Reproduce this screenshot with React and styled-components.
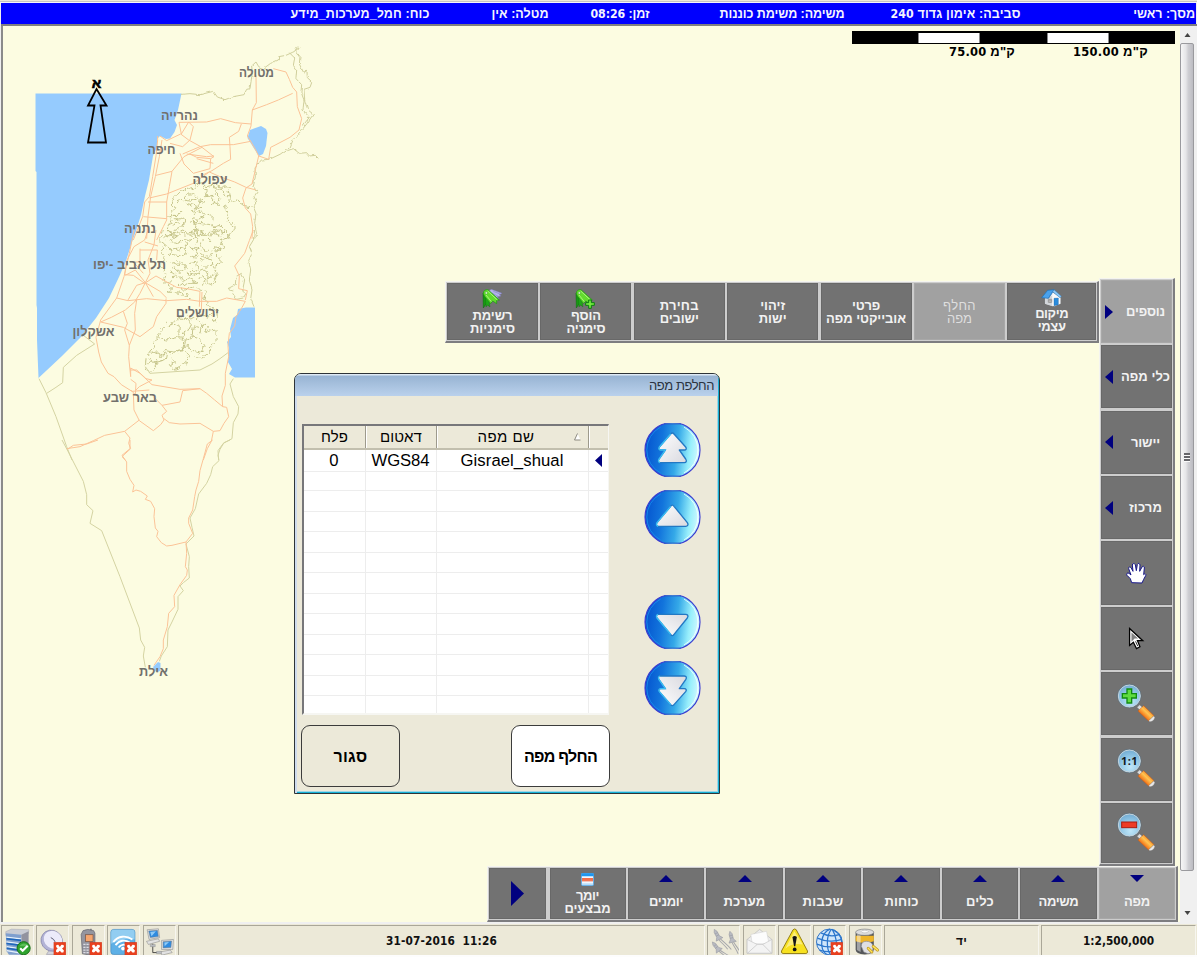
import React, { useLayoutEffect, useRef, useState } from "react";
import styled, { createGlobalStyle, css } from "styled-components";

const Global = createGlobalStyle`
  html, body { margin: 0; padding: 0; background: #f0f0f0; }
  body { width: 1197px; height: 957px; overflow: hidden; font-family: "Liberation Sans", sans-serif; }
  * { box-sizing: border-box; }
  svg { display: block; }
`;

/* ---------- text that is tracked to a given width ---------- */
const FitBox = styled.span`
  display: block;
  flex: none;
  width: ${(p) => p.$w}px;
  white-space: nowrap;
  direction: ${(p) => (p.$ltr ? "ltr" : "rtl")};
`;

const Num = styled.span`
  font-family: "DejaVu Sans Condensed", "DejaVu Sans", sans-serif;
  font-stretch: condensed;
  font-size: 0.98em;
`;

function Fit({ w, ltr, children }) {
  const ref = useRef(null);
  const [gap, setGap] = useState(0);
  useLayoutEffect(() => {
    const el = ref.current;
    const count = Math.max(1, el.textContent.length);
    const natural = el.getBoundingClientRect().width - gap * count;
    const next = (w - natural) / count;
    if (Math.abs(next - gap) > 0.02) setGap(next);
  }, [w, gap]);
  return (
    <FitBox $w={w} $ltr={ltr}>
      <span ref={ref} style={{ letterSpacing: gap }}>
        {children}
      </span>
    </FitBox>
  );
}

/* ---------- frame ---------- */
const Screen = styled.div`
  width: 1197px;
  height: 957px;
  display: flex;
  flex-direction: column;
  background: #f0f0f0;
`;

const TopStrip = styled.div`
  flex: none;
  height: 3px;
  background: linear-gradient(#ece9d8 0 1px, #c4c4c4 1px 2px, #f4f4fa 2px);
`;

const InfoBar = styled.header`
  flex: none;
  height: 21px;
  margin: 0 1px;
  padding: 1px 1px 0 0;
  background: #0000fe;
  color: #f4f4ff;
  display: grid;
  direction: rtl;
  grid-template-columns: 174.5px 176px 195px 101px 119px 1fr;
  align-items: center;
  font: bold 12.5px "Liberation Sans", sans-serif;
`;

const Body = styled.div`
  flex: none;
  height: 898px;
  display: flex;
  border-top: 2px solid #808080;
  margin-left: 1px;
`;

const Canvas = styled.main`
  position: relative;
  width: 1179px;
  height: 896px;
  border-left: 2px solid #8a8a8a;
  background: #fcfce1;
  overflow: hidden;
`;

const Over = styled.div`
  position: absolute;
  left: ${(p) => p.$x - 3}px;
  top: ${(p) => p.$y - 26}px;
`;

/* ---------- scrollbar ---------- */
const ScrollTrack = styled.div`
  width: 14px;
  height: 896px;
  background: #f0f0f0;
  display: flex;
  flex-direction: column;
  align-items: center;
`;
const ScrollCap = styled.div`
  flex: none;
  height: ${(p) => p.$h}px;
  display: flex;
  align-items: ${(p) => (p.$end ? "flex-end" : "center")};
  padding-bottom: ${(p) => (p.$end ? 7 : 0)}px;
`;
const Thumb = styled.div`
  flex: none;
  width: 14px;
  height: 828px;
  border: 1px solid #9a9a9e;
  border-radius: 2px;
  background: linear-gradient(90deg, #f6f6f6 0, #e6e6e8 40%, #cfcfd3 60%, #bcbcc2 100%);
  display: flex;
  flex-direction: column;
  align-items: center;
  justify-content: center;
`;
const Grip = styled.i`
  width: 6px;
  height: 3px;
  background: #66666a;
  border-bottom: 1px solid #fafafa;
`;

/* ---------- scale bar ---------- */
const ScaleBar = styled.div`
  width: 323px;
  height: 13px;
  background: #000;
  padding: 2px 0 1px 66px;
  display: flex;
  gap: 67px;
`;
const ScaleGap = styled.div`
  width: 62px;
  background: #fff;
  border: 1px solid #8a8a8a;
  border-width: 0 1px;
`;
const ScaleText = styled.div`
  display: flex;
  padding: 0 0 0 97px;
  gap: 58px;
  color: #000;
  font: bold 13px/16px "Liberation Sans", sans-serif;
`;

/* ---------- toolbars ---------- */
const barFrame = css`
  background: #cdcdcd;
  border: 1px solid #f4f4f0;
  border-right: 2px solid #7d7d80;
  border-bottom: 2px solid #7d7d80;
`;
const ContextBar = styled.div`
  ${barFrame}
  width: 654px;
  height: 62px;
  display: grid;
  grid-template-columns: repeat(6, 91px) 1fr;
  gap: 2.4px;
  padding: 1px;
`;
const SideBar = styled.div`
  ${barFrame}
  width: 76px;
  height: 588px;
  display: grid;
  grid-template-rows: 63px repeat(7, 63.1px) 1fr;
  gap: 2.3px;
  padding: 1px;
`;
const MainBar = styled.div`
  ${barFrame}
  width: 691px;
  height: 56px;
  display: grid;
  grid-template-columns: 57px 1fr;
  gap: 3.5px;
  padding: 1px;
`;
const MenuItems = styled.div`
  display: grid;
  grid-template-columns: repeat(8, 1fr);
  gap: 2.4px;
`;
const tool = css`
  background: ${(p) => (p.$on ? "#a1a1a1" : "#727272")};
  border: 1px solid ${(p) => (p.$on ? "#a8a8a8" : "#686868")};
  color: ${(p) => (p.$dim ? "#dedede" : "#f2f2f2")};
  font: ${(p) => (p.$dim ? "normal" : "bold")} 13px/13px "Liberation Sans", sans-serif;
  min-width: 0;
  min-height: 0;
`;
const StackTool = styled.div`
  ${tool}
  display: flex;
  flex-direction: column;
  align-items: center;
  justify-content: ${(p) => (p.$icon ? "flex-start" : "center")};
  padding-top: ${(p) => (p.$icon ? p.$icon : 0)}px;
`;
const SideTool = styled.div`
  ${tool}
  display: flex;
  align-items: center;
  justify-content: ${(p) => (p.$icon ? "center" : "flex-start")};
  padding: ${(p) => (p.$icon ? (p.$lens ? "0 4px 4px 0" : "0 1px 0 0") : "0 0 0 3px")};
`;
const SideLabel = styled.div`
  flex: 1;
  display: flex;
  justify-content: center;
  padding-left: 6px;
  margin-right: -1px;
`;
const MenuTool = styled.div`
  ${tool}
  display: flex;
  flex-direction: column;
  align-items: center;
  padding-top: ${(p) => p.$pad ?? 6}px;
  gap: ${(p) => p.$gap ?? 12.5}px;
`;
const Lines = styled.div`
  display: flex;
  flex-direction: column;
  align-items: center;
`;

/* ---------- dialog ---------- */
const Dialog = styled.section`
  width: 426px;
  height: 421px;
  border: 1px solid #2e3438;
  border-radius: 7px 7px 0 0;
  background: #ece9d9;
  overflow: hidden;
  box-shadow: inset 2px 0 #cfdcee, inset -1px -1px #15b0d4, inset -2px -2px #9fd6e6;
`;
const TitleBar = styled.div`
  height: 22px;
  margin: 0 1px 0 0;
  padding: 3px 4px 0;
  background: linear-gradient(#dfeaf5 0 1px, #98b4d3 2px, #bad1ec);
  display: flex;
  justify-content: flex-end;
  color: #2b3340;
  font: 13px/18px "Liberation Sans", sans-serif;
`;
const DialogBody = styled.div`
  display: flex;
  padding: 28px 0 0 7px;
`;
const LeftCol = styled.div`
  width: 308px;
`;
const Table = styled.div`
  width: 307px;
  height: 291px;
  border: 2px solid #77777a;
  border-right-color: #f6f6f2;
  border-bottom-color: #f6f6f2;
  border-right-width: 1px;
  background: #fff;
  overflow: hidden;
`;
const rowGrid = css`
  display: grid;
  grid-template-columns: 62px 71px 152px 1fr;
`;
const HeadRow = styled.div`
  ${rowGrid}
  height: 24px;
  background: #ece9d9;
  border-bottom: 2px solid #c2bfae;
  font: 15px/22px "Liberation Sans", sans-serif;
`;
const HeadCell = styled.div`
  position: relative;
  display: flex;
  justify-content: center;
  padding-right: ${(p) => p.$shift || 0}px;
  &:not(:last-child) {
    border-right: 1px solid #9d9a8c;
    box-shadow: 1px 0 #fff;
  }
`;
const SortMark = styled.div`
  position: absolute;
  right: 7px;
  top: 7px;
`;
const Row = styled.div`
  ${rowGrid}
  height: 20.5px;
  font: 16.7px/21px "Liberation Sans", sans-serif;
  color: #000;
`;
const Cell = styled.div`
  display: flex;
  justify-content: center;
  align-items: center;
  padding-right: 1px;
  border-bottom: 1px solid #ededed;
  &:not(:last-child) { border-right: 1px solid #ededed; }
`;
const Actions = styled.div`
  display: flex;
  justify-content: space-between;
  padding-top: 10px;
  margin-left: -1px;
`;
const Action = styled.button`
  width: 99px;
  height: 62px;
  padding: 2px 0 0;
  border: 1.5px solid #3c3c3c;
  border-radius: 9px;
  background: ${(p) => (p.$primary ? "#fff" : "#ece9d9")};
  display: flex;
  align-items: center;
  justify-content: center;
  color: #000;
  font: bold 16px/18px "Liberation Sans", sans-serif;
`;
const Pager = styled.div`
  display: flex;
  flex-direction: column;
  padding-left: 34px;
  margin-top: -1px;
`;
const PagerSlot = styled.div`
  margin-bottom: ${(p) => p.$after}px;
`;

/* ---------- status bar ---------- */
const Status = styled.footer`
  flex: none;
  height: 35px;
  background: linear-gradient(#f0f0f0 0 2px, #ece9d8 2px 33px, #fdfdfd 33px);
  padding: 3px 1px 2px;
  display: grid;
  grid-template-columns: 33px 33px 33px 33px 33px 526.5px 33px 33px 33px 33px 33px 154.5px 154.5px;
  gap: 2.45px;
`;
const StatusCell = styled.div`
  height: 30px;
  border-left: 1px solid #aaa798;
  border-top: 1px solid #aaa798;
  border-right: 1px solid #f7f6ef;
  overflow: hidden;
  display: flex;
  align-items: center;
  justify-content: center;
  color: #111;
  font: bold 12px/14px "Liberation Sans", sans-serif;
`;

/* ---------- small marks ---------- */
const NAVY = "#00007f";
function Tri({ dir, w = 8, h = 14 }) {
  const pts = {
    left: `${w},0 ${w},${h} 0,${h / 2}`,
    right: `0,0 ${w},${h / 2} 0,${h}`,
    up: `0,${h} ${w},${h} ${w / 2},0`,
    down: `0,0 ${w},0 ${w / 2},${h}`,
  }[dir];
  return (
    <svg width={w} height={h}>
      <polygon points={pts} fill={NAVY} />
    </svg>
  );
}

function ScrollArrow({ down }) {
  return (
    <svg width="7" height="4" viewBox="0 0 7 4">
      <path d={down ? "M0.5 0H6.5L3.5 4Z" : "M0.5 4H6.5L3.5 0Z"} fill="#444" />
    </svg>
  );
}

/* ---------- icons ---------- */
function House() {
  return (
    <svg width="21" height="18" viewBox="0 0 63 54">
      <path d="M12 25L34 10 58 26V44L40 52 12 44Z" fill="#e9ecef" stroke="#9aa3ab" />
      <path d="M12 25V44L34 52V20Z" fill="#d2d6da" />
      <path d="M34 10L58 26V44L34 52Z" fill="#fafafa" />
      <path d="M2 26L20 4 39 2 22 28Z" fill="#4aa2ec" stroke="#1d6fb8" strokeWidth="2" />
      <path d="M39 2L61 22 57 26 36 9 22 28Z" fill="#8fcaf8" stroke="#2f7fc4" strokeWidth="1.5" />
      <path d="M39 28L52 27V47L39 50Z" fill="#2a8bdc" stroke="#135c9c" />
      <path d="M22 31H32V40H22ZM27 31V40M22 35.500H32" fill="#fff" stroke="#777" strokeWidth="2" />
    </svg>
  );
}

function Tags({ plus }) {
  return (
    <svg width="21" height="20" viewBox="0 0 63 60">
      {!plus && (
        <g fill="#b5b4ea" stroke="#7b79bd" strokeWidth="1.500">
          <path d="M18 7L28 1 60 13 52 17 57 21 46 23 52 30 30 18Z" />
          <path d="M34 7L54 15M30 12L48 22" fill="none" />
        </g>
      )}
      <path d="M3 12L13 17 21 49 12 45 4 57Z" fill="#179a12" stroke="#0b6a0a" strokeWidth="1.500" />
      <path d="M10 24L20 30 24 54 17 48 12 54Z" fill="#1fa818" stroke="#0b6a0a" strokeWidth="1" />
      <path d="M4 14C4 5 10 1 18 2L52 33 44 34 44 44 32 36 26 44 8 22Z" fill="#62db2c" stroke="#1b9413" strokeWidth="2" />
      <path d="M17 6L46 33M12 18L28 38" stroke="#a9f37b" strokeWidth="3" fill="none" />
      <circle cx="13" cy="12" r="3.500" fill="#e9ffe0" stroke="#1a7a12" />
      {plus && (
        <path d="M41 33H49V41H58V49H49V58H41V49H32V41H41Z" fill="#74ea3f" stroke="#0b7d10" strokeWidth="3" />
      )}
    </svg>
  );
}

function Hand() {
  return (
    <svg width="21" height="22" viewBox="0 0 63 66">
      <path
        d="M17 62L13 50 3 40C0 35 4 31 9 34L15 39 8 20C7 15 12 13 15 17L21 28 19 9C19 4 26 3 28 8L31 26 34 7C36 2 42 4 42 9L41 28 48 15C51 11 56 13 55 18L53 38C56 34 61 35 59 41L53 52 48 63Z"
        fill="#fff"
        stroke="#17178a"
        strokeWidth="3"
        strokeLinejoin="round"
      />
    </svg>
  );
}

function Cursor() {
  return (
    <svg width="17" height="23" viewBox="0 0 54 72">
      <path d="M5 4V58L17 48 27 68 38 62 30 43H47Z" fill="#fff" stroke="#000" strokeWidth="4" />
      <path d="M11 17V46L18 39 21 36 32 36Z" fill="#828282" />
      <path d="M24 45L31 60" stroke="#000" strokeWidth="2.500" />
    </svg>
  );
}

function Magnifier({ kind }) {
  const id = `lens-${kind}`;
  return (
    <svg width="40" height="40" viewBox="0 0 120 120">
      <defs>
        <radialGradient id={id} cx=".55" cy=".75" r=".8">
          <stop offset="0" stopColor="#bfe6f8" />
          <stop offset=".6" stopColor="#8cc3e4" />
          <stop offset="1" stopColor="#6ba4cc" />
        </radialGradient>
        <linearGradient id={`${id}-h`} x1="0" y1="1" x2="1" y2="0">
          <stop offset="0" stopColor="#e0480a" />
          <stop offset=".35" stopColor="#f47a1c" />
          <stop offset=".55" stopColor="#ffc552" />
          <stop offset=".75" stopColor="#f47a1c" />
          <stop offset="1" stopColor="#e0480a" />
        </linearGradient>
      </defs>
      <path d="M66 76L74 68 86 79 77 88Z" fill="#d9dcde" stroke="#777" strokeWidth="2" />
      <path d="M69 87L86 71 117 101 101 117Z" fill={`url(#${id}-h)`} stroke="#c65a14" strokeWidth="1.500" />
      <path d="M101 116L116 102 119 106C119 114 111 120 104 119Z" fill="#e8e8e8" stroke="#777" />
      <circle cx="43" cy="42" r="35" fill={`url(#${id})`} stroke="#5b6a74" strokeWidth="3" />
      <circle cx="43" cy="42" r="33" fill="none" stroke="#c4d3dc" strokeWidth="3" />
      {kind === "in" && (
        <path d="M36 21H50V35H64V48H50V63H36V48H22V35H36Z" fill="#5fdc3f" stroke="#128a12" strokeWidth="4" />
      )}
      {kind === "out" && <rect x="20" y="33" width="45" height="17" fill="#ee3b26" stroke="#a81d12" strokeWidth="3" />}
      {kind === "one" && (
        <text x="43" y="53" textAnchor="middle" fontFamily="Noto Sans" fontWeight="700" fontSize="33" fill="#10191f" textLength="50">
          1:1
        </text>
      )}
    </svg>
  );
}

function Journal() {
  return (
    <svg width="13" height="13" viewBox="0 0 39 39">
      <rect x="1" y="1" width="37" height="37" rx="4" fill="#eef7ff" stroke="#1f96ee" strokeWidth="2" />
      <path d="M1 4Q1 1 4 1H35Q38 1 38 4V10H1Z" fill="#1f96ee" />
      <path d="M3 15H36V25H3Z" fill="#f1603a" />
      <path d="M3 18H36M3 22H36" stroke="#ffb29a" />
      <path d="M3 31H36V36H3Z" fill="#b8dcf8" />
    </svg>
  );
}

function RoundArrow({ kind }) {
  const down = kind === "down" || kind === "last";
  const double = kind === "first" || kind === "last";
  const single = "M80 49C83 44 87 44 90 49L130 98C134 104 131 109 125 109H43C37 109 35 104 39 98Z";
  const twice =
    "M80 33C83 29 87 29 90 33L125 72C129 77 126 81 121 81H106L125 108C129 114 127 119 121 119H48C42 119 41 114 45 108L64 81H50C44 81 42 77 46 72Z";
  return (
    <svg width="57" height="54" viewBox="0 0 171 162">
      <defs>
        <linearGradient id={`ball-${kind}`} x1="0" y1=".38" x2="1" y2=".5">
          <stop offset="0" stopColor="#0454cf" />
          <stop offset=".3" stopColor="#1274dc" />
          <stop offset=".58" stopColor="#35a9e8" />
          <stop offset=".82" stopColor="#98effc" />
          <stop offset="1" stopColor="#d5f9ff" />
        </linearGradient>
        <linearGradient id={`face-${kind}`} x1="0" y1="0" x2="1" y2="1">
          <stop offset="0" stopColor="#fff" />
          <stop offset="1" stopColor="#d9d9df" />
        </linearGradient>
        <clipPath id={`cut-${kind}`}>
          <rect x="0" y="1" width="171" height="160" />
        </clipPath>
      </defs>
      <g clipPath={`url(#cut-${kind})`}>
        <circle cx="85.500" cy="81" r="82.500" fill={`url(#ball-${kind})`} stroke="#3b3bd0" strokeWidth="3.500" />
        <path d="M120 12A78 78 0 0 1 120 150" fill="none" stroke="#fff" strokeWidth="3" opacity=".8" />
        <path d="M50 12A78 78 0 0 0 50 150" fill="none" stroke="#1b8cf0" strokeWidth="3" opacity=".8" />
        <path d="M60 2.500H111M60 159.500H111" stroke="#2a57c4" strokeWidth="3" />
      </g>
      <g transform={down ? (double ? "translate(0 164) scale(1 -1)" : "translate(0 167) scale(1 -1)") : undefined}>
        <path
          d={double ? twice : single}
          fill={`url(#face-${kind})`}
          stroke="#2278c4"
          strokeWidth="4"
          strokeLinejoin="round"
        />
        <path
          d={double ? "M80 33L46 72Q42 79 50 81H64L45 108Q41 116 48 119" : "M80 49L39 98Q35 105 42 109"}
          fill="none"
          stroke="#39bdf3"
          strokeWidth="4"
        />
      </g>
    </svg>
  );
}

function Cross() {
  return (
    <g>
      <rect x="54" y="49" width="38" height="41" fill="#e8401f" stroke="#c02c10" strokeWidth="1" />
      <path d="M62 58L68 57 73 64 78 57 85 58 86 64 80 69 86 75 84 82 78 82 73 76 67 82 61 80 61 74 66 69 61 64Z" fill="#fff" />
    </g>
  );
}

function StatusIcon({ children }) {
  return (
    <svg width="33" height="30" viewBox="0 0 99 90">
      {children}
    </svg>
  );
}

const Server = () => (
  <StatusIcon>
    <path d="M12 15L30 7 86 9 84 22 66 30 12 27Z" fill="#c9ccd4" stroke="#8e929c" />
    <path d="M12 20L62 25V89H22L15 78Z" fill="#7f9fce" />
    <path d="M62 25L85 14V78L64 90Z" fill="#92939f" />
    <path d="M14 33L61 38M14 48L61 54M15 63L61 70M16 76L60 84" stroke="#e6f1fb" strokeWidth="4" />
    <path d="M14 38L61 43M14 53L61 59M15 68L61 75" stroke="#1f67bc" strokeWidth="5" />
    <circle cx="69" cy="68" r="21" fill="#2fa32e" stroke="#176f1a" strokeWidth="3" />
    <path d="M56 62C62 50 80 50 84 62" fill="#7dd277" opacity=".6" />
    <path d="M58 68L66 76 82 60" fill="none" stroke="#fff" strokeWidth="7" />
  </StatusIcon>
);
const Dish = () => (
  <StatusIcon>
    <path d="M38 76L30 88H66L56 74Z" fill="#d3d3dc" stroke="#9b9bab" strokeWidth="2" />
    <ellipse cx="47" cy="44" rx="35" ry="33" transform="rotate(35 47 44)" fill="#b3b3d6" stroke="#7c7ca4" strokeWidth="2" />
    <ellipse cx="51" cy="41" rx="31" ry="27" transform="rotate(35 51 41)" fill="#ecebfa" />
    <path d="M53 40L44 34M53 40L58 48" stroke="#54546c" strokeWidth="3" />
    <Cross />
  </StatusIcon>
);
const Phone = () => (
  <StatusIcon>
    <path d="M54 6H60V16H54Z" fill="#888" />
    <path d="M32 12Q46 4 66 12L70 20V78Q66 88 48 89L30 86 26 24Z" fill="#94959f" stroke="#5c5d68" strokeWidth="2" />
    <rect x="40" y="25" width="24" height="22" fill="#f5a56e" stroke="#6f4a3a" strokeWidth="2" />
    <path d="M33 56H56M33 65H52M33 74H52M33 82H52" stroke="#dddde4" strokeWidth="4" strokeDasharray="7 3" />
    <Cross />
  </StatusIcon>
);
const Wifi = () => (
  <StatusIcon>
    <rect x="9" y="8" width="77" height="80" rx="9" fill="#5eb0e6" stroke="#3f86bd" strokeWidth="2" />
    <path d="M10 16Q10 9 18 9H78Q85 9 85 16V40Q50 34 10 54Z" fill="#a8daf5" opacity=".7" />
    <g fill="none" stroke="#fff" strokeWidth="6">
      <path d="M17 48C32 28 58 26 78 40" />
      <path d="M24 58C36 42 56 40 69 50" />
      <path d="M34 66C41 56 52 55 60 60" />
    </g>
    <circle cx="48" cy="69" r="6" fill="#fff" />
    <Cross />
  </StatusIcon>
);
const Network = () => (
  <StatusIcon>
    <g stroke="#777" strokeWidth="1.500">
      <path d="M10 9L46 6 50 34 16 40Z" fill="#dfe2e6" />
      <path d="M15 13L43 11 46 31 20 34Z" fill="#2f8be0" />
      <path d="M8 46L46 38 50 46 14 56Z" fill="#e2e2e2" />
      <path d="M56 43L94 40 92 72 56 72Z" fill="#dfe2e6" />
      <path d="M61 47L88 45 86 66 61 67Z" fill="#2f8be0" />
      <path d="M50 80L84 74 90 82 58 90Z" fill="#e2e2e2" />
    </g>
    <path d="M28 54V82H54" fill="none" stroke="#222" strokeWidth="2.500" />
    <path d="M20 56H36V63H20ZM40 78H56V86H40Z" fill="#b9bcc0" stroke="#777" />
    <path d="M20 16L38 14 24 30ZM65 50L80 48 66 62Z" fill="#8fcaf6" />
  </StatusIcon>
);
const Missiles = () => (
  <StatusIcon>
    <g fill="#b9bbc2" stroke="#8f929b" strokeWidth="1.500">
      {[
        "translate(20 8) rotate(-28)",
        "translate(14 48) rotate(-38)",
        "translate(70 14) rotate(-14)",
      ].map((t) => (
        <g key={t} transform={t}>
          <path d="M0 0L5 9V26L12 36H-12L-5 26V9Z" />
          <path d="M-5 14H5M-5 22H5" fill="none" />
          <path d="M-2 36C0 50 6 60 8 76M3 36C8 52 14 62 18 82" fill="none" stroke="#a5a6ab" strokeWidth="3" />
        </g>
      ))}
    </g>
  </StatusIcon>
);
const Mail = () => (
  <StatusIcon>
    <path d="M10 40L50 8 89 40V84H10Z" fill="#ececec" stroke="#b8b8b8" strokeWidth="2" />
    <path d="M22 24L72 14 80 54H26Z" fill="#fcfcfc" stroke="#ccc" strokeWidth="1.500" />
    <path d="M10 40L42 56H60L89 40V84H10Z" fill="#f3f3f3" stroke="#c2c2c2" strokeWidth="2" />
    <path d="M11 84L42 56M60 56L88 84" stroke="#bdbdbd" strokeWidth="2" />
  </StatusIcon>
);
const Warning = () => (
  <StatusIcon>
    <path d="M45 9Q50 4 55 9L91 77Q93 84 86 85H13Q6 84 8 77Z" fill="#f7e120" stroke="#8f7a10" strokeWidth="3" />
    <path d="M49 14L20 70Q40 50 76 56Z" fill="#fdf29a" opacity=".75" />
    <path d="M43 32Q50 26 57 32L52 62H48Z" fill="#151515" />
    <circle cx="50" cy="72" r="6" fill="#151515" />
  </StatusIcon>
);
const Globe = () => (
  <StatusIcon>
    <circle cx="49" cy="48" r="41" fill="#cfe6fb" stroke="#2a6dc0" strokeWidth="3" />
    <g fill="none" stroke="#2b76cc" strokeWidth="4">
      <path d="M51 7C20 20 16 70 40 88M56 7C40 26 38 66 52 88M58 7C72 30 74 60 68 84M62 10C84 22 92 42 88 60" />
      <path d="M22 19C42 30 66 30 82 24M11 36C36 48 68 48 89 40M9 55C34 66 64 66 90 58M18 74C34 80 50 80 62 78" />
    </g>
    <Cross />
  </StatusIcon>
);
const Battery = () => (
  <StatusIcon>
    <path d="M18 18H76V72Q76 86 47 88 18 86 18 72Z" fill="#55575b" />
    <path d="M18 28H76V46Q48 56 18 46Z" fill="#eeb52a" />
    <path d="M22 20H34V80L22 74Z" fill="#fff" opacity=".45" />
    <ellipse cx="47" cy="17" rx="29" ry="10" fill="#dcdcdc" stroke="#77787a" strokeWidth="2" />
    <ellipse cx="47" cy="15" rx="11" ry="4" fill="#fafafa" stroke="#888" />
    <path d="M36 62Q36 46 52 46 70 46 74 62L72 80 58 86 44 80Z" fill="#dfdfe2" stroke="#85858a" strokeWidth="2" />
    <path d="M58 68L70 80M74 62L88 74" stroke="#b98f14" strokeWidth="9" strokeLinecap="round" />
    <path d="M58 68L70 80M74 62L88 74" stroke="#ffe35c" strokeWidth="5" strokeLinecap="round" />
  </StatusIcon>
);

/* ---------- map ---------- */
const MapSvg = styled.svg`
  position: absolute;
  left: 0;
  top: 0;
  text {
    font: bold 13.5px "Liberation Sans", sans-serif;
    fill: #72706c;
    direction: rtl;
    text-anchor: middle;
  }
  text.north {
    fill: #000;
    stroke: #000;
    stroke-width: 0.6px;
    font-size: 14px;
  }
`;

const CITIES = [
  ["מטולה", 256.5, 76.5, 35],
  ["נהרייה", 179.5, 119.5, 37],
  ["חיפה", 161.5, 154, 28],
  ["עפולה", 210, 184, 35],
  ["נתניה", 140, 233, 32],
  ["תל אביב -יפו", 129.5, 268.7, 73],
  ["ירושלים", 197.5, 317, 43],
  ["אשקלון", 93.5, 336, 42],
  ["באר שבע", 130, 402, 54],
  ["אילת", 153.5, 675.5, 29],
];

function MapDrawing() {
  return (
    <MapSvg width="400" height="700" viewBox="3 26 400 700">
      <defs>
        <filter id="rugged" x="-5%" y="-5%" width="110%" height="110%">
          <feTurbulence type="fractalNoise" baseFrequency="0.22" numOctaves="2" seed="7" />
          <feDisplacementMap in="SourceGraphic" scale="7" xChannelSelector="R" yChannelSelector="G" />
        </filter>
        <filter id="rough" x="-5%" y="-5%" width="110%" height="110%">
          <feTurbulence type="fractalNoise" baseFrequency="0.18" numOctaves="2" seed="3" />
          <feDisplacementMap in="SourceGraphic" scale="3" xChannelSelector="R" yChannelSelector="G" />
        </filter>
      </defs>
      <path
        d="M35.500 93.500H181.500L178 110 174.500 120 177 125 174.500 132 170 138.500 166 139 160 136 157 139 157 147 153 156 149 180 145 196 141 215 136 231 132 242 126 261 119 277 109 298 96 318 80 338 62 356 38.500 378 37 340 37 308 36.500 305 36.500 172 35.500 171Z"
        fill="#95cbfe"
      />
      <path d="M261 126L266 129 267.500 133 266 146 263 154 259 156 255 150 247.500 138 250 130Z" fill="#95cbfe" />
      <path d="M246 307.500H255V377.500H235L229 374 232 369 228 362 229 348 227 342 231 337 230 329 233 318 237 315 238 309Z" fill="#95cbfe" />
      <path d="M153 667L158 662 160.500 663V671L156 672Z" fill="#95cbfe" />

      <g fill="none" strokeWidth="3" strokeLinejoin="round">
        <g filter="url(#rough)">
          <g transform="scale(.33333)">
            <path
              stroke="#d0cf9c"
              d="M543 283L570 281 600 284 640 274 652 291 675 299 700 290 732 284 740 268 750 266 757 218 755 198 768 186 776 200 790 206 812 190 835 180 836 170 858 166 884 154 892 140 M886 152L899 141 890 156 900 170 898 192 910 216 921 214 922 236 935 248 930 262 912 268 914 300 922 328 940 343 920 372 904 392 880 418 870 442 840 463 808 478 784 480 M868 158L884 174 880 196 890 210 888 236 905 254 903 276 912 300 909 330 928 352 908 378 M862 452L880 446 898 460 920 458 928 468 946 466 955 475"
            />
            <path stroke="#d0cf9c" d="M784 480L765 504 766 530 760 560 772 575 762 590 770 606 760 620 768 640 764 670 770 700 764 716" />
          </g>
          <g transform="translate(0 230) scale(.33333)">
            <path
              stroke="#d0cf9c"
              d="M764 0L760 30 748 50 756 70 746 92 752 120 748 150 756 180 752 206 762 230 M700 180L684 176 706 164 708 140 724 130 734 150 728 180 738 190 730 204 710 208 698 190"
            />
          </g>
        </g>

        <g filter="url(#rugged)">
          <g transform="scale(.33333)" stroke="#c6c58b" strokeWidth="3">
            <path d="M524 590L548 570 580 562 600 548 618 560 640 556 668 562 684 560 690 580 686 606 710 600 730 616 758 622" />
            <path d="M524 590L514 612 524 626 508 650 516 662 500 690 512 700 494 716 M606 562L622 572 616 590 640 586 636 610 656 614 660 592 644 580 650 566 670 570 672 590 688 590 M684 606L676 622 688 640 682 662 706 680 694 700 676 716 M530 606L546 598 556 586 580 584 596 592 574 604 554 600 M602 590L596 616 576 632 584 642 602 636 614 650 594 658 576 656 M570 666L598 670 630 674 650 690 620 700 596 690 566 700 M520 672L536 664 540 684 524 692M560 610L588 618 600 604 612 606 M606 640L640 646 638 664" />
            <path d="M502 646L530 650 540 636 M530 698L552 690 570 706 598 702 620 712 M640 700L660 690 672 700 M524 660L548 654 556 670 542 680 M510 706L526 712 540 702 M590 660L586 690 600 710 M580 640L590 620 606 626 M640 680L660 676 676 690 668 704" />
          </g>
          <g transform="translate(0 230) scale(.33333)" stroke="#c6c58b" strokeWidth="3">
            <path d="M490 0L478 30 496 44 484 60 494 90 484 110 500 130 490 150 520 176 500 186 540 190 576 206 M676 0L690 20 660 30 672 50 648 60 650 80 668 96 640 110 652 130 638 166 620 160 626 130 612 120 588 130 M510 0L524 20 510 34 540 40 552 26 576 32 590 20 570 6 M600 8L620 20 640 10 664 20 M610 30L600 50 620 64 644 50 664 60 M520 60L550 54 560 70 540 80 516 76 M572 50L596 60 588 84 566 80 M600 90L620 84 640 94 630 108 604 108 M510 96L530 104 548 96 562 110 540 124 516 114 M570 100L590 96 594 116 572 126 M516 140L540 136 548 154 570 146 590 156 560 166 534 160 M600 140L616 146 610 164 M590 176L620 180 614 210 624 230" />
            <path d="M498 20L514 14 528 6 M540 8L556 16 M500 54L516 60 508 72 M530 90L540 108 M560 40L556 56 M600 66L612 76 604 84 M624 26L636 40 M560 130L580 136 600 130 M510 126L526 132 M500 160L516 152 M540 172L556 180 580 170 M580 8L596 26 588 44 M640 64L632 80 M646 130L624 146" />
            <path d="M640 276L652 262 648 236 622 230 M622 262L600 254 576 270 552 262 530 270 500 286 478 310 466 340 454 362 438 386 436 410 450 430 M470 324L500 330 540 320 556 332 550 360 520 366 500 362 478 372 466 364 M500 286L520 280 538 290 536 316 M556 332L576 318 600 328 614 346 600 370 574 362 560 344 M576 318L580 290 600 296 612 280 626 290 614 306 648 300 648 330 632 350 630 368 606 384 588 378 M512 372L538 364 552 362 570 376 556 400 538 410 520 418 508 404 526 398 514 386 M454 362L480 376 500 372 496 392 470 400 450 386 M442 398L466 396 470 416 452 424 M556 300L546 330 558 350 548 362 M590 262L606 282 600 310 M622 262L644 250 M560 270L574 284 566 300" />
          </g>
        </g>

        <g transform="scale(.33333)">
          <path
            stroke="#fbc397"
            d="M768 226L769 308 757 330 753 378 742 408 752 424 765 446 776 468 M820 206L858 216 868 238 878 262 890 276 892 320 905 356 897 390 870 412 828 434 812 442 806 478 776 468M757 330L800 314 835 300 878 280M537 367L620 366 662 356 706 368 753 372 M724 372L716 394 688 412 690 440 692 478 670 490 636 512 610 524 M480 408L500 422 542 402 566 420 606 442 642 470 632 476 M752 424L700 434 632 434 600 440 548 462 M537 367L544 402 566 366 580 380 570 420 548 440 510 430 M473 408V420L468 468 458 530 448 590 434 606 428 650 416 680 400 720 M486 420L478 470 466 530 452 590 444 650 440 716 M468 526L516 514 552 470 606 442 M540 460L552 492 580 520 630 506 632 476 590 472 570 462 M516 514L508 560 500 606 500 660 490 680 470 720 M448 594L500 582 540 566 580 550 628 516 660 530 704 546 738 562 768 570 M776 468L766 510 756 552 738 564 728 594 736 624 752 642 758 680 756 716 M444 606L500 606 M430 650L500 656 M590 476L640 490 M560 462L620 470 642 468"
          />
        </g>

        <g transform="translate(0 230) scale(.33333)">
          <g stroke="#d4d3a2">
            <path d="M436 410L450 430 480 428 600 420 636 402 660 386 684 368" />
            <path d="M700 446L690 462 700 500 716 530 714 552 700 578 696 626 670 640 654 662 656 690" />
            <path d="M250 316L284 342 230 376 190 412 188 458 168 472 140 490" />
            <path d="M117 446L138 488 168 560 200 650 216 690" />
          </g>
          <path
            stroke="#fbc397"
            d="M402 0L396 30 388 70 372 140 350 204 302 270 288 322 296 366 304 396 324 430 342 440 364 464 396 484 448 480 M444 0L434 30 402 50 380 92 374 134 400 136 434 160 468 138 M468 0L462 44 444 90 450 130 436 158 M434 36L474 48 M420 60H472L470 90 M420 56V96L400 96 430 130 M376 136L406 120 436 158 480 184 500 204 M436 158L420 190 404 216 M436 158L410 166 384 210 M436 158L460 200 M350 204L384 212 440 206 500 212 560 208 600 214 650 214 680 204 736 214 724 236 708 260 704 288 688 310 684 346 686 380 676 430 676 466 666 498 668 530 M404 216L376 240 334 262 302 276 M410 210L404 250 406 300 388 346 386 380 392 440 M468 138L504 158 530 172 560 176 600 184 598 230 M606 186L604 240 M736 210L742 182 716 176 718 138 704 108 734 70 748 32 760 0 M302 276L370 292 420 320 460 290 470 260 498 220 498 206 M370 244L382 280 374 300 388 346 M392 440L392 414 420 430 456 464 540 478 M392 420L410 420 438 446 456 450 418 470 408 480 M392 448L408 460 406 494 392 480 M400 490L402 540 418 572 460 602 482 584 492 570 486 556 500 544 486 526 460 500 M486 526L540 516 548 482 600 476 620 490 644 510 668 530 680 532 686 560 672 580 660 602 640 604 600 580 540 582 508 578 492 566 M540 478L600 476 M418 570L374 604 314 616 280 632 240 650 200 656 M374 604L390 624 386 640 392 656 366 680 376 690 M640 604L634 634 622 656 610 690"
          />
        </g>

        <g transform="translate(20 440) scale(.33333)">
          <g stroke="#d4d3a2">
            <path d="M126 0L142 30 190 124 200 164 200 194 219 212 210 250 245 272 300 410 358 564 362 600 374 622 370 648 376 682" />
            <path d="M630 0L612 8 600 28 594 46 597 62 578 80 572 104 560 130 536 162 526 206 510 234 516 262 522 288 498 312 508 350 506 380 508 414 490 428 480 438 490 452 474 470 474 508 456 546 444 570 442 620 424 648 418 664" />
          </g>
          <path
            stroke="#fbc397"
            d="M142 28L160 16 200 12 234 0 M330 0V26L306 46 320 66 320 94 330 118 342 136 338 156 348 150 362 154 382 168 376 178 392 184 404 206 402 230 406 264 414 274 410 290 424 308 440 318 456 316 498 306 518 280 506 250 506 234 518 210 524 170 528 150 536 124 540 92 550 56 562 12 578 0 M498 306L500 340 496 380 502 390 500 406 480 434 462 466 464 500 446 520 442 560 430 600 430 626 420 650 402 676"
          />
        </g>
      </g>

      <path
        d="M96.500 89L106.500 105.500H100.500L106 142.500H88L94.500 105.500H88Z"
        fill="none"
        stroke="#000"
        strokeWidth="1.800"
      />
      <text className="north" x="96.500" y="87.500">
        א
      </text>

      {CITIES.map(([name, x, y, w]) => (
        <text key={name} x={x} y={y} textLength={w} lengthAdjust="spacingAndGlyphs">
          {name}
        </text>
      ))}
    </MapSvg>
  );
}

/* ---------- data ---------- */
const INFO = [
  ["מסך: ראשי", 62],
  [<>סביבה: אימון גדוד <Num>240</Num></>, 130],
  ["משימה: משימת כוננות", 125],
  [<>זמן: <Num>08:26</Num></>, 59],
  ["מטלה: אין", 57],
  ["כוח: חמל_מערכות_מידע", 139],
];

const CONTEXT = [
  { icon: <Tags />, lines: [["רשימת", 40], ["סימניות", 45]] },
  { icon: <Tags plus />, lines: [["הוסף", 30], ["סימניה", 39]] },
  { lines: [["בחירת", 39], ["ישובים", 39]] },
  { lines: [["זיהוי", 25], ["ישות", 28]] },
  { lines: [["פרטי", 28], ["אובייקטי מפה", 80]] },
  { lines: [["החלף", 33], ["מפה", 25]], on: true },
  { icon: <House />, lines: [["מיקום", 33], ["עצמי", 28]] },
];

const SIDE = [
  { label: "נוספים", w: 39, dir: "right", on: true },
  { label: "כלי מפה", w: 49, dir: "left" },
  { label: "יישור", w: 29, dir: "left" },
  { label: "מרכוז", w: 33, dir: "left" },
  { icon: <Hand /> },
  { icon: <Cursor /> },
  { icon: <Magnifier kind="in" />, lens: true },
  { icon: <Magnifier kind="one" />, lens: true },
  { icon: <Magnifier kind="out" />, lens: true },
];

const MENU = [
  ["יומנים", 34],
  ["מערכת", 42],
  ["שכבות", 41],
  ["כוחות", 34],
  ["כלים", 28],
  ["משימה", 40],
];

export default function App() {
  return (
    <Screen>
      <Global />
      <TopStrip />
      <InfoBar>
        {INFO.map(([t, w], i) => (
          <Fit key={i} w={w}>
            {t}
          </Fit>
        ))}
      </InfoBar>
      <Body>
        <Canvas>
          <MapDrawing />

          <Over $x={852} $y={31}>
            <ScaleBar>
              <ScaleGap />
              <ScaleGap />
            </ScaleBar>
            <ScaleText>
              <Fit w={66}>{'ק"מ '}<Num>75.00</Num></Fit>
              <Fit w={75}>{'ק"מ '}<Num>150.00</Num></Fit>
            </ScaleText>
          </Over>

          <Over $x={445} $y={281}>
            <ContextBar>
              {CONTEXT.map((c, i) => (
                <StackTool key={i} $on={c.on} $dim={c.on} $icon={c.icon ? 5 : 0}>
                  {c.icon}
                  <Lines>
                    {c.lines.map(([t, w]) => (
                      <Fit key={t} w={w}>
                        {t}
                      </Fit>
                    ))}
                  </Lines>
                </StackTool>
              ))}
            </ContextBar>
          </Over>

          <Over $x={1099} $y={278}>
            <SideBar>
              {SIDE.map((s, i) => (
                <SideTool key={i} $on={s.on} $icon={!!s.icon} $lens={s.lens}>
                  {s.icon || (
                    <>
                      <Tri dir={s.dir} />
                      <SideLabel>
                        <Fit w={s.w}>{s.label}</Fit>
                      </SideLabel>
                    </>
                  )}
                </SideTool>
              ))}
            </SideBar>
          </Over>

          <Over $x={487} $y={866}>
            <MainBar>
              <StackTool>
                <Tri dir="right" w={13} h={25} />
              </StackTool>
              <MenuItems>
                <MenuTool $pad={4} $gap={3}>
                  <Journal />
                  <Lines>
                    <Fit w={23}>יומך</Fit>
                    <Fit w={46}>מבצעים</Fit>
                  </Lines>
                </MenuTool>
                {MENU.map(([t, w]) => (
                  <MenuTool key={t}>
                    <Tri dir="up" w={14} h={7} />
                    <Fit w={w}>{t}</Fit>
                  </MenuTool>
                ))}
                <MenuTool $on>
                  <Tri dir="down" w={14} h={7} />
                  <Fit w={26}>מפה</Fit>
                </MenuTool>
              </MenuItems>
            </MainBar>
          </Over>

          <Over $x={294} $y={373}>
            <Dialog>
              <TitleBar>
                <Fit w={65}>החלפת מפה</Fit>
              </TitleBar>
              <DialogBody>
                <LeftCol>
                  <Table>
                    <HeadRow>
                      <HeadCell>
                        <Fit w={27}>פלח</Fit>
                      </HeadCell>
                      <HeadCell>
                        <Fit w={42}>דאטום</Fit>
                      </HeadCell>
                      <HeadCell $shift={13}>
                        <Fit w={57}>שם מפה</Fit>
                        <SortMark>
                          <svg width="7" height="8" viewBox="0 0 7 8">
                            <path d="M.5 7L3.500 .5L6.500 7Z" fill="#fff" />
                            <path d="M6.500 7H.5L3.500 .5" fill="none" stroke="#8d8b80" />
                          </svg>
                        </SortMark>
                      </HeadCell>
                      <HeadCell />
                    </HeadRow>
                    <Row>
                      <Cell>0</Cell>
                      <Cell>
                        <Fit w={58} ltr>
                          WGS84
                        </Fit>
                      </Cell>
                      <Cell>
                        <Fit w={103} ltr>
                          Gisrael_shual
                        </Fit>
                      </Cell>
                      <Cell>
                        <Tri dir="left" w={7} h={13} />
                      </Cell>
                    </Row>
                    {Array.from({ length: 13 }, (_, i) => (
                      <Row key={i}>
                        <Cell />
                        <Cell />
                        <Cell />
                        <Cell />
                      </Row>
                    ))}
                  </Table>
                  <Actions>
                    <Action>
                      <Fit w={34}>סגור</Fit>
                    </Action>
                    <Action $primary>
                      <Fit w={73}>החלף מפה</Fit>
                    </Action>
                  </Actions>
                </LeftCol>
                <Pager>
                  <PagerSlot $after={13}>
                    <RoundArrow kind="first" />
                  </PagerSlot>
                  <PagerSlot $after={51}>
                    <RoundArrow kind="up" />
                  </PagerSlot>
                  <PagerSlot $after={12}>
                    <RoundArrow kind="down" />
                  </PagerSlot>
                  <PagerSlot $after={0}>
                    <RoundArrow kind="last" />
                  </PagerSlot>
                </Pager>
              </DialogBody>
            </Dialog>
          </Over>
        </Canvas>
        <ScrollTrack>
          <ScrollCap $h={17}>
            <ScrollArrow />
          </ScrollCap>
          <Thumb>
            <Grip />
            <Grip />
            <Grip />
          </Thumb>
          <ScrollCap $h={51} $end>
            <ScrollArrow down />
          </ScrollCap>
        </ScrollTrack>
      </Body>
      <Status>
        <StatusCell><Server /></StatusCell>
        <StatusCell><Dish /></StatusCell>
        <StatusCell><Phone /></StatusCell>
        <StatusCell><Wifi /></StatusCell>
        <StatusCell><Network /></StatusCell>
        <StatusCell>
          <Fit w={111} ltr><Num>{"31-07-2016\u00a0 11:26"}</Num></Fit>
        </StatusCell>
        <StatusCell><Missiles /></StatusCell>
        <StatusCell><Mail /></StatusCell>
        <StatusCell><Warning /></StatusCell>
        <StatusCell><Globe /></StatusCell>
        <StatusCell><Battery /></StatusCell>
        <StatusCell>
          <Fit w={11}>יד</Fit>
        </StatusCell>
        <StatusCell>
          <Fit w={71} ltr><Num>1:2,500,000</Num></Fit>
        </StatusCell>
      </Status>
    </Screen>
  );
}
